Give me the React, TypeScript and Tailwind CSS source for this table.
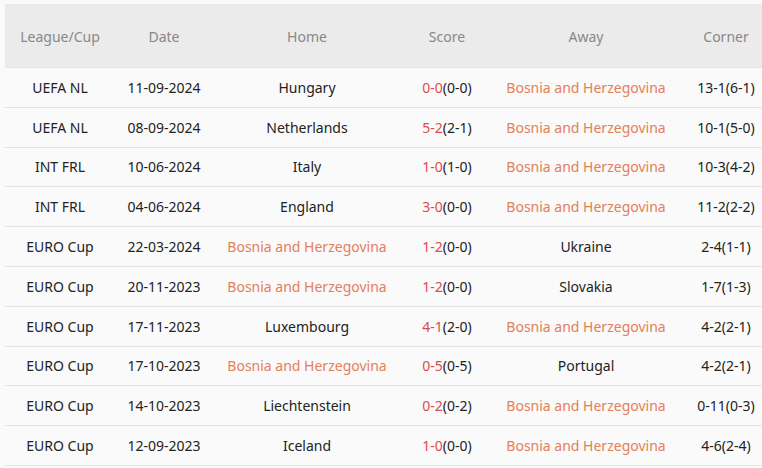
import React from "react";

type Row = {
  league: string;
  date: string;
  home: string;
  score: string;
  ht: string;
  away: string;
  corner: string;
};

const TEAM = "Bosnia and Herzegovina";

const rows: Row[] = [
  { league: "UEFA NL", date: "11-09-2024", home: "Hungary", score: "0-0", ht: "(0-0)", away: TEAM, corner: "13-1(6-1)" },
  { league: "UEFA NL", date: "08-09-2024", home: "Netherlands", score: "5-2", ht: "(2-1)", away: TEAM, corner: "10-1(5-0)" },
  { league: "INT FRL", date: "10-06-2024", home: "Italy", score: "1-0", ht: "(1-0)", away: TEAM, corner: "10-3(4-2)" },
  { league: "INT FRL", date: "04-06-2024", home: "England", score: "3-0", ht: "(0-0)", away: TEAM, corner: "11-2(2-2)" },
  { league: "EURO Cup", date: "22-03-2024", home: TEAM, score: "1-2", ht: "(0-0)", away: "Ukraine", corner: "2-4(1-1)" },
  { league: "EURO Cup", date: "20-11-2023", home: TEAM, score: "1-2", ht: "(0-0)", away: "Slovakia", corner: "1-7(1-3)" },
  { league: "EURO Cup", date: "17-11-2023", home: "Luxembourg", score: "4-1", ht: "(2-0)", away: TEAM, corner: "4-2(2-1)" },
  { league: "EURO Cup", date: "17-10-2023", home: TEAM, score: "0-5", ht: "(0-5)", away: "Portugal", corner: "4-2(2-1)" },
  { league: "EURO Cup", date: "14-10-2023", home: "Liechtenstein", score: "0-2", ht: "(0-2)", away: TEAM, corner: "0-11(0-3)" },
  { league: "EURO Cup", date: "12-09-2023", home: "Iceland", score: "1-0", ht: "(0-0)", away: TEAM, corner: "4-6(2-4)" },
];

const cols = "grid grid-cols-[110px_98px_188px_92px_186px_94px]";

function Team({ name }: { name: string }) {
  return <span className={name === TEAM ? "text-[#e3805a]" : "text-[#222]"}>{name}</span>;
}

export default function App() {
  return (
    <div
      className="w-[762px] h-[468px] overflow-hidden bg-[#fafafa] pl-[5px] pt-[4px]"
      style={{ fontFamily: "Tahoma, 'Noto Sans', 'DejaVu Sans', sans-serif" }}
    >
      <div className="w-[768px] text-[14px]">
        <div className={`${cols} h-[64px] pt-[2px] items-center bg-[#ebebeb] text-[#888] border-b border-[#e2e2e2]`}>
          <div className="text-center">League/Cup</div>
          <div className="text-center">Date</div>
          <div className="text-center">Home</div>
          <div className="text-center">Score</div>
          <div className="text-center">Away</div>
          <div className="text-center">Corner</div>
        </div>
        {rows.map((r, i) => (
          <div
            key={i}
            className={`${cols} h-[39.8px] items-center border-b border-[#e4e4e4] bg-[#fafafa] text-[#222]`}
          >
            <div className="text-center">{r.league}</div>
            <div className="text-center">{r.date}</div>
            <div className="text-center">
              <Team name={r.home} />
            </div>
            <div className="text-center">
              <span className="text-[#de4a4f]">{r.score}</span>
              <span>{r.ht}</span>
            </div>
            <div className="text-center">
              <Team name={r.away} />
            </div>
            <div className="text-center">{r.corner}</div>
          </div>
        ))}
      </div>
    </div>
  );
}
